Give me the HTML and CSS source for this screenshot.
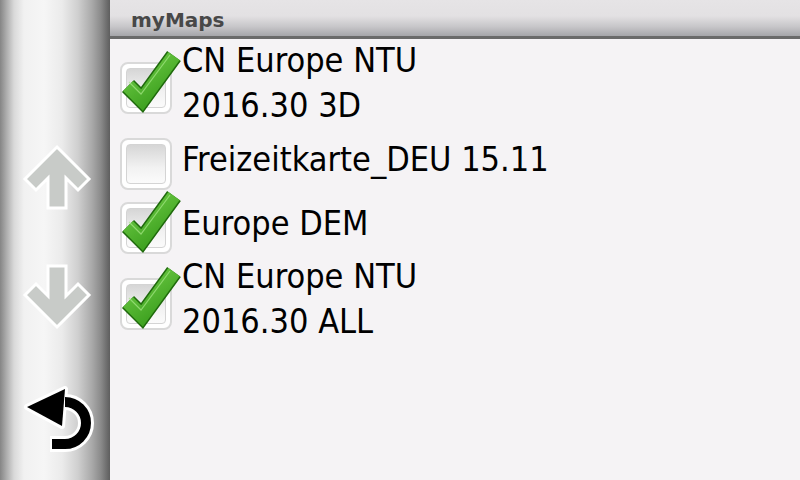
FILE: index.html
```html
<html>
  <head>
    <link rel="stylesheet" href="styles.css">
    <title>myMaps</title>
  </head>
  <body>
    <svg class="defs" width="0" height="0">
      <defs>
        <linearGradient id="tickFill" gradientUnits="userSpaceOnUse" x1="10" y1="6" x2="50" y2="64">
          <stop offset="0" stop-color="#74d04a"/>
          <stop offset="1" stop-color="#2c9212"/>
        </linearGradient>
      </defs>
    </svg>
    <div class="device">
      <aside class="nav">
        <svg class="nav-btn up" width="70" height="70" viewBox="0 0 70 70">
          <polygon points="35,5 67,37 56,48 44,36 44,66 26,66 26,36 14,48 3,37" fill="#c8cbc8" stroke="#fff" stroke-width="3" stroke-linejoin="miter"/>
        </svg>
        <svg class="nav-btn down" width="70" height="70" viewBox="0 0 70 70">
          <polygon points="35,65 67,33 56,22 44,34 44,4 26,4 26,34 14,22 3,33" fill="#c8cbc8" stroke="#fff" stroke-width="3" stroke-linejoin="miter"/>
        </svg>
        <svg class="nav-btn back" width="76" height="72" viewBox="0 0 76 72">
          <g fill="none" stroke="#fff" stroke-width="16">
            <path d="M46 22 A21 21 0 0 1 46 64 L31 64"/>
          </g>
          <polygon points="8,27 46,9 43,46" fill="#fff" stroke="#fff" stroke-width="6" stroke-linejoin="round"/>
          <path d="M46 22 A21 21 0 0 1 46 64 L33 64" fill="none" stroke="#000" stroke-width="10"/>
          <polygon points="8,27 46,9 43,46" fill="#000"/>
        </svg>
      </aside>
      <main class="panel">
        <header class="panel-head">myMaps</header>
        <ul class="map-list">
          <li class="map-item">
            <span class="checkbox">
              <svg class="tick" width="70" height="70" viewBox="0 0 70 70">
                <polyline points="10,36 24,50 56,6" fill="none" stroke="#1f6a0c" stroke-width="17"/>
                <polyline points="10,36 24,50 56,6" fill="none" stroke="url(#tickFill)" stroke-width="14"/>
                <polyline points="11,32 23,44 52,5" fill="none" stroke="#a6e888" stroke-width="1.2" opacity="0.7"/>
              </svg>
            </span>
            <span class="map-name">CN Europe NTU<br>2016.30 3D</span>
          </li>
          <li class="map-item">
            <span class="checkbox"></span>
            <span class="map-name">Freizeitkarte_DEU 15.11</span>
          </li>
          <li class="map-item">
            <span class="checkbox">
              <svg class="tick" width="70" height="70" viewBox="0 0 70 70">
                <polyline points="10,36 24,50 56,6" fill="none" stroke="#1f6a0c" stroke-width="17"/>
                <polyline points="10,36 24,50 56,6" fill="none" stroke="url(#tickFill)" stroke-width="14"/>
                <polyline points="11,32 23,44 52,5" fill="none" stroke="#a6e888" stroke-width="1.2" opacity="0.7"/>
              </svg>
            </span>
            <span class="map-name">Europe DEM</span>
          </li>
          <li class="map-item">
            <span class="checkbox">
              <svg class="tick" width="70" height="70" viewBox="0 0 70 70">
                <polyline points="10,36 24,50 56,6" fill="none" stroke="#1f6a0c" stroke-width="17"/>
                <polyline points="10,36 24,50 56,6" fill="none" stroke="url(#tickFill)" stroke-width="14"/>
                <polyline points="11,32 23,44 52,5" fill="none" stroke="#a6e888" stroke-width="1.2" opacity="0.7"/>
              </svg>
            </span>
            <span class="map-name">CN Europe NTU<br>2016.30 ALL</span>
          </li>
        </ul>
      </main>
    </div>
  </body>
</html>
```

FILE: styles.css
```css
html, body {
  margin: 0;
  padding: 0;
}
body {
  width: 800px;
  height: 480px;
  overflow: hidden;
  font-family: "DejaVu Sans", sans-serif;
}

.defs {
  position: absolute;
}

.device {
  display: flex;
  height: 480px;
}

/* left button strip */
.nav {
  width: 110px;
  flex: none;
  box-sizing: border-box;
  padding: 142px 0 0 4px;
  display: flex;
  flex-direction: column;
  align-items: center;
  background: linear-gradient(to right,
    #858585 0,
    #aaaaaa 6px,
    #d9d9d9 14px,
    #f1f1f1 24px,
    #f6f6f6 44px,
    #ebebeb 62px,
    #cfcfcf 78px,
    #a9a9a9 92px,
    #8a8a8a 101px,
    #6c6c6c 107px,
    #5e5e5e 110px);
}
.nav-btn {
  display: block;
}
.nav-btn.down {
  margin-top: 50px;
}
.nav-btn.back {
  margin-top: 48px;
}

/* map list */
.panel {
  flex: 1;
  background: #f5f3f5;
}
.panel-head {
  height: 36px;
  line-height: 40px;
  padding-left: 21px;
  border-bottom: 3px solid #6a6a6a;
  background: linear-gradient(#e6e4e6 0, #e3e1e3 16px, #c6c5c8 27px, #a5a5a9 36px);
  color: #484848;
  font-weight: bold;
  font-size: 20px;
}
.map-list {
  list-style: none;
  margin: 0;
  padding: 5px 0 0 10px;
}
.map-item {
  display: flex;
  align-items: center;
  gap: 10px;
  padding: 6px 0;
}
.map-name {
  font-family: "DejaVu Sans Condensed", "DejaVu Sans", sans-serif;
  font-stretch: semi-condensed;
  font-size: 34px;
  line-height: 45px;
  margin: -12px 0 -2px;
  color: #000;
}

.checkbox {
  position: relative;
  flex: none;
  width: 52px;
  height: 52px;
  box-sizing: border-box;
  padding: 4px;
  border: 2px solid #d9d9d9;
  border-radius: 8px;
  background: #fff;
}
.checkbox::before {
  content: "";
  display: block;
  height: 100%;
  box-sizing: border-box;
  border: 1px solid #d4d4d4;
  border-radius: 4px;
  background: linear-gradient(#d6d6d6, #f2f2f2 60%, #fbfbfb);
}
.tick {
  position: absolute;
  left: -4px;
  top: -14px;
}
```
